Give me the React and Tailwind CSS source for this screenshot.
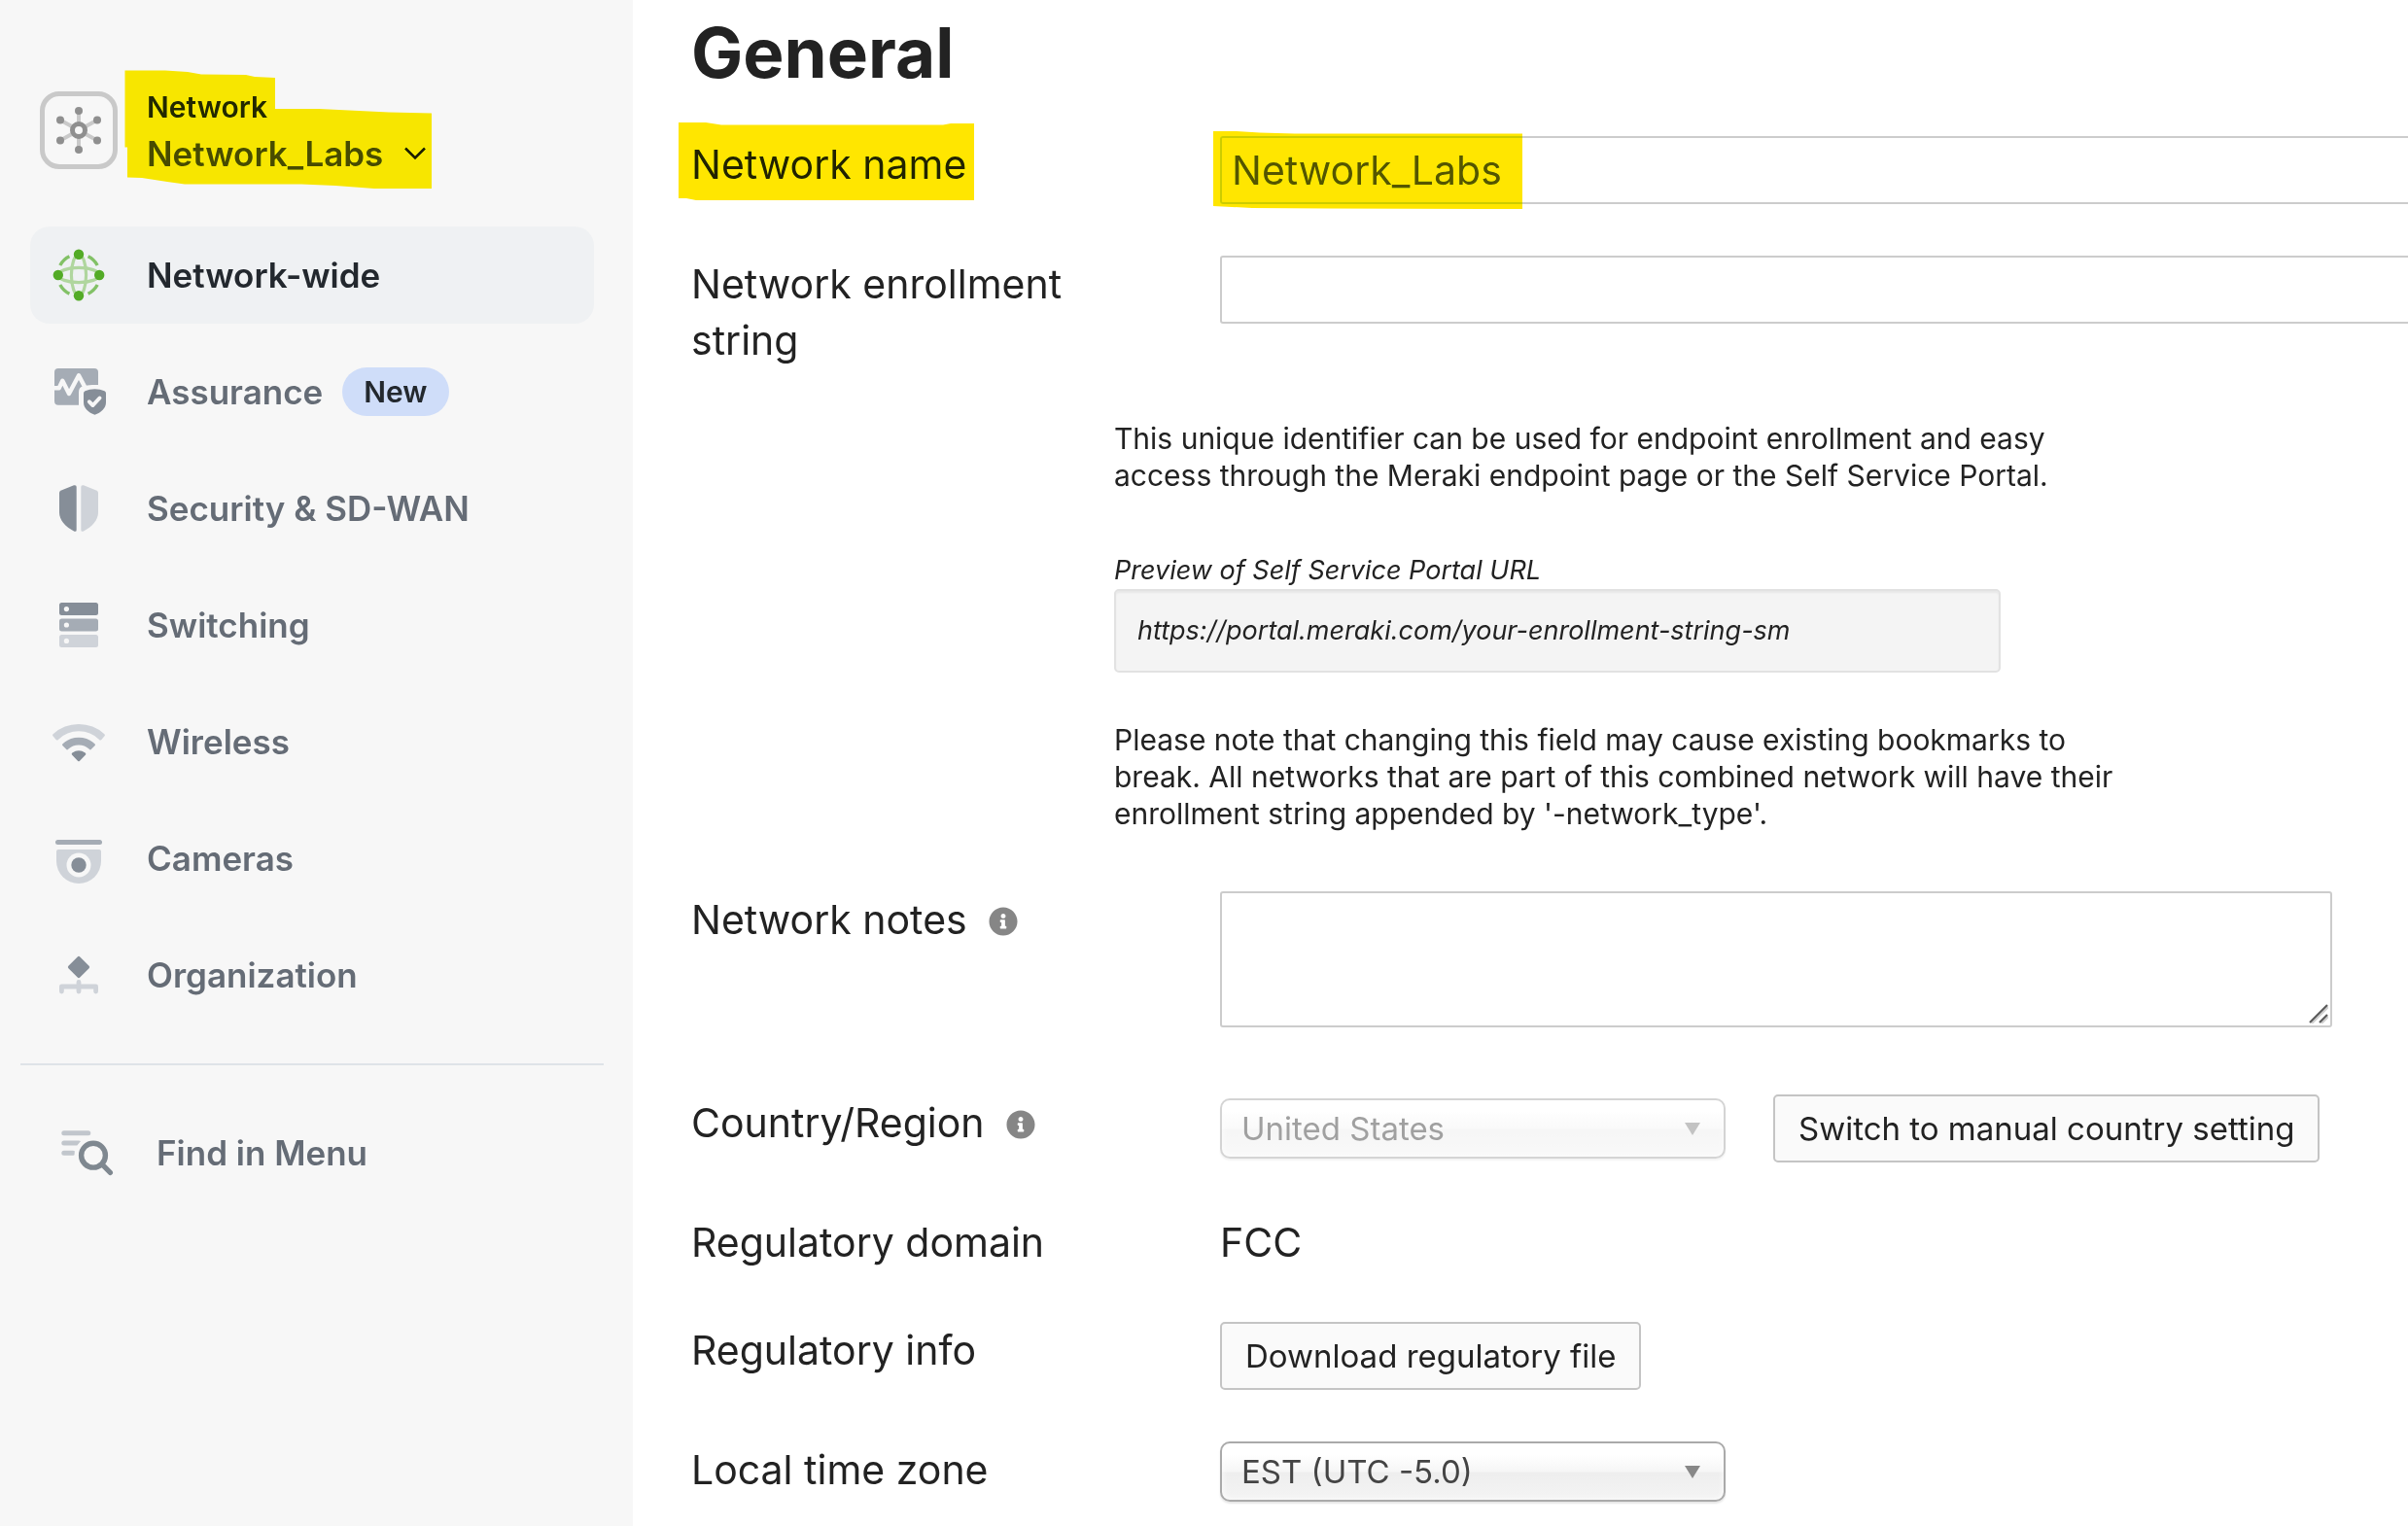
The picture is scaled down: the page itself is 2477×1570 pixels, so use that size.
import React, { useState } from 'react';
import { FaInfoCircle } from 'react-icons/fa';

const NetworkHubIcon = () => (
  <svg viewBox="0 0 70 70" className="w-full h-full" aria-hidden="true">
    <g stroke="#c9c9c9" strokeWidth="4">
      <path d="M35 15V55M16 24.5L54 45.5M54 24.5L16 45.5" />
    </g>
    <circle cx="35" cy="35" r="6.5" fill="#f7f7f7" stroke="#8f8f8f" strokeWidth="5" />
    <g fill="#8f8f8f">
      <circle cx="35" cy="15" r="4" />
      <circle cx="35" cy="55" r="4" />
      <circle cx="16" cy="24.5" r="4" />
      <circle cx="54" cy="24.5" r="4" />
      <circle cx="16" cy="45.5" r="4" />
      <circle cx="54" cy="45.5" r="4" />
    </g>
  </svg>
);

const GlobeIcon = () => (
  <svg viewBox="0 0 56 56" className="w-14 h-14 shrink-0" fill="none" aria-hidden="true">
    <g stroke="#b0d69e" strokeWidth="3.2">
      <ellipse cx="28" cy="28" rx="7.6" ry="21" />
      <ellipse cx="28" cy="28" rx="21" ry="7.6" />
    </g>
    <g stroke="#82c166" strokeWidth="3.4">
      <path d="M8.8 18A22 22 0 0 1 18.4 8.8" />
      <path d="M37.6 8.8A22 22 0 0 1 47.2 18" />
      <path d="M47.2 38A22 22 0 0 1 37.6 47.2" />
      <path d="M18.4 47.2A22 22 0 0 1 8.8 38" />
    </g>
    <g fill="#53ab26">
      <circle cx="28" cy="6.8" r="5.2" />
      <circle cx="28" cy="49.2" r="5.2" />
      <circle cx="6.8" cy="28" r="5.2" />
      <circle cx="49.2" cy="28" r="5.2" />
    </g>
  </svg>
);

const AssuranceIcon = () => (
  <svg viewBox="0 0 56 56" className="w-14 h-14 shrink-0" fill="none" aria-hidden="true">
    <rect x="3" y="4" width="45" height="37.7" rx="4" fill="#a5acb5" />
    <path
      d="M2 24.3H7.7L11.3 16.7L18 30L28 11.3L36 26.5"
      stroke="#f7f7f7"
      strokeWidth="4.4"
      strokeLinejoin="round"
    />
    <path d="M28 43V28.5Q28 23.5 32 22.5Q38 20.5 44 21H50V43Z" fill="#f7f7f7" />
    <path
      d="M44.5 25.3Q50 25.5 54.5 27.3Q56 28 56 29.5V39C56 45 51 49.5 44.5 51.8C38 49.5 33 45 33 39V29.5Q33 28 34.5 27.3Q39 25.5 44.5 25.3Z"
      fill="#868e98"
    />
    <path
      d="M38.9 38.3L42.5 42L49.5 34.5"
      stroke="#f7f7f7"
      strokeWidth="4"
      strokeLinecap="round"
      strokeLinejoin="round"
    />
  </svg>
);

const ShieldIcon = () => (
  <svg viewBox="0 0 56 56" className="w-14 h-14 shrink-0" aria-hidden="true">
    <path
      d="M25.7 6V50Q25.7 52.4 23.5 51.7C14 47 8 40 8 32V12Q8 10.3 10 9.5L23 4.3Q25.7 3.6 25.7 6Z"
      fill="#868e98"
    />
    <path
      d="M30.3 6V50Q30.3 52.4 32.5 51.7C42 47 48 40 48 32V12Q48 10.3 46 9.5L33 4.3Q30.3 3.6 30.3 6Z"
      fill="#cfd3d9"
    />
  </svg>
);

const SwitchIcon = () => (
  <svg viewBox="0 0 56 56" className="w-14 h-14 shrink-0" aria-hidden="true">
    <rect x="8" y="5" width="40" height="13" rx="2.5" fill="#868e98" />
    <rect x="8" y="21.6" width="40" height="13" rx="2.5" fill="#a5acb5" />
    <rect x="8" y="38" width="40" height="13" rx="2.5" fill="#cfd3d9" />
    <g fill="#f7f7f7">
      <circle cx="15.4" cy="11.6" r="2.6" />
      <circle cx="15.4" cy="28" r="2.6" />
      <circle cx="15.4" cy="44.4" r="2.6" />
    </g>
  </svg>
);

const WirelessIcon = () => (
  <svg viewBox="0 0 56 56" className="w-14 h-14 shrink-0" fill="none" aria-hidden="true">
    <g strokeLinejoin="round" strokeWidth="3">
      <path
        d="M2.6 21.3A38 38 0 0 1 53.4 21.3L50.2 25A31.5 31.5 0 0 0 5.8 25Z"
        fill="#cfd3d9"
        stroke="#cfd3d9"
      />
      <path
        d="M12.6 31.3A22.5 22.5 0 0 1 43.4 31.3L39.9 34.8A17 17 0 0 0 16.1 34.8Z"
        fill="#a5acb5"
        stroke="#a5acb5"
      />
      <path d="M22.2 40.8Q28 36.8 33.8 40.8L28 46.6Z" fill="#868e98" stroke="#868e98" />
    </g>
  </svg>
);

const CameraIcon = () => (
  <svg viewBox="0 0 56 56" className="w-14 h-14 shrink-0" aria-hidden="true">
    <rect x="4" y="9" width="48" height="5" rx="2.5" fill="#a5acb5" />
    <path d="M7 19H49Q51 19 51 21V31A23 23 0 0 1 5 31V21Q5 19 7 19Z" fill="#cfd3d9" />
    <circle cx="28" cy="35" r="12.5" fill="#f7f7f7" />
    <circle cx="28" cy="35" r="7.7" fill="#868e98" />
  </svg>
);

const OrganizationIcon = () => (
  <svg viewBox="0 0 56 56" className="w-14 h-14 shrink-0" fill="none" aria-hidden="true">
    <path
      d="M28 10.7L37.3 20L28 29.3L18.7 20Z"
      fill="#868e98"
      stroke="#868e98"
      strokeWidth="3.6"
      strokeLinejoin="round"
    />
    <path
      d="M10.4 45V40H45.6V45M28 35.5V45"
      stroke="#cfd3d9"
      strokeWidth="4.8"
      strokeLinecap="round"
      strokeLinejoin="round"
    />
  </svg>
);

const FindIcon = () => (
  <svg viewBox="0 0 56 56" className="w-14 h-14 shrink-0" fill="none" aria-hidden="true">
    <path
      d="M4.8 7.8H29.8M4.8 18H20M4.8 28.2H14"
      stroke="#c1c6cc"
      strokeWidth="5"
      strokeLinecap="round"
    />
    <circle cx="35" cy="30.7" r="17" fill="#f7f7f7" stroke="#f7f7f7" strokeWidth="5" />
    <circle cx="35" cy="30.7" r="12.4" stroke="#7f8890" strokeWidth="5.4" />
    <path d="M44.5 40.4L52.4 48.4" stroke="#7f8890" strokeWidth="5.2" strokeLinecap="round" />
  </svg>
);

const navItems = [
  { label: 'Network-wide', icon: GlobeIcon },
  { label: 'Assurance', icon: AssuranceIcon, badge: 'New' },
  { label: 'Security & SD-WAN', icon: ShieldIcon },
  { label: 'Switching', icon: SwitchIcon },
  { label: 'Wireless', icon: WirelessIcon },
  { label: 'Cameras', icon: CameraIcon },
  { label: 'Organization', icon: OrganizationIcon },
];

const Sidebar = () => (
  <aside className="w-[651px] shrink-0 bg-[#f7f7f7] pt-[88px] pl-[21px] pr-[30px] text-[35px] font-semibold text-[#656c76]">
    <button type="button" className="relative flex items-center gap-[30px] ml-5 text-left">
      <span className="w-20 h-20 shrink-0 rounded-[20px] border-[5px] border-[#c9c9c9]">
        <NetworkHubIcon />
      </span>
      <span className="flex flex-col gap-1">
        <span className="text-[30px] leading-[44px] text-[#23282e]">Network</span>
        <span className="flex items-center gap-[22px] leading-[44px] text-[#484b52]">
          Network_Labs
          <svg viewBox="0 0 22 14" className="w-[22px] h-[14px]" fill="none" aria-hidden="true">
            <path d="M1 1.5L11 11.5L21 1.5" stroke="#1c1c1c" strokeWidth="2.6" />
          </svg>
        </span>
      </span>
      {/* marker stroke over the network switcher */}
      <svg
        viewBox="0 0 316 122"
        className="absolute left-[87px] -top-4 w-[316px] h-[122px] mix-blend-darken"
        aria-hidden="true"
      >
        <path
          d="M.5 .5H42L65 2L79 4.5L125 5L134 7L155 8V40H200L272 43.5L316 44.5V122H257L217 119L182 117.5H62L44 115L18 111L3 110.5V79.5H.5Z"
          fill="#ffe600"
        />
      </svg>
    </button>

    <nav className="mt-[53px] mx-2.5">
      <ul className="flex flex-col gap-5">
        {navItems.map(({ label, icon: Icon, badge }, i) => (
          <li key={label}>
            <a
              href="#"
              className={
                i === 0
                  ? 'flex items-center gap-[42px] h-[100px] pl-[22px] rounded-[20px] bg-[#eff1f3] text-[#23282e]'
                  : 'flex items-center gap-[42px] h-[100px] pl-[22px] rounded-[20px]'
              }
            >
              <Icon />
              <span className="flex items-center gap-5">
                {label}
                {badge && (
                  <span className="rounded-full bg-[#cfddf9] px-[22px] text-[30px] leading-[50px] text-[#23282e]">
                    {badge}
                  </span>
                )}
              </span>
            </a>
          </li>
        ))}
      </ul>
    </nav>

    <hr className="mt-[41px] border-t-2 border-[#dfe3e8]" />

    <button type="button" className="flex items-center gap-11 h-[100px] mt-10 ml-10">
      <FindIcon />
      Find in Menu
    </button>
  </aside>
);

const Row = ({ label, htmlFor, info, marked, children }) => (
  <div className="flex items-start">
    <div className="w-[544px] shrink-0 flex items-center gap-[22px]">
      <label htmlFor={htmlFor} className="relative max-w-[460px]">
        {label}
        {marked && (
          <svg
            viewBox="0 0 304 80"
            className="absolute -left-[13px] -top-3.5 w-[304px] h-20 mix-blend-darken"
            aria-hidden="true"
          >
            <path d="M0 0H28L44 2.5H272L280 1H304V80H18L8 78H0Z" fill="#ffe600" />
          </svg>
        )}
      </label>
      {info && <FaInfoCircle className="w-[30px] h-[30px] mt-1 text-[#868686]" />}
    </div>
    <div className="flex-1 min-w-0">{children}</div>
  </div>
);

const Select = ({ id, value, disabled }) => (
  <div className={disabled ? 'relative w-[520px] opacity-50' : 'relative w-[520px]'}>
    <select
      id={id}
      disabled={disabled}
      defaultValue={value}
      className="block appearance-none w-full h-[62px] px-5 rounded-[10px] border-2 border-[#aaa] bg-[linear-gradient(#fff_20%,#f6f6f6_50%,#eee_52%,#f4f4f4_100%)] shadow-[inset_0_0_6px_#fff,0_2px_2px_rgba(0,0,0,0.1)] text-[33px] leading-[40px] text-[#444] opacity-100"
    >
      <option>{value}</option>
    </select>
    <svg
      viewBox="0 0 16 13"
      className="absolute right-[26px] top-[25px] w-4 h-[13px] pointer-events-none"
      aria-hidden="true"
    >
      <path d="M0 0H16L8 13Z" fill="#888" />
    </svg>
  </div>
);

const Button = ({ children }) => (
  <button
    type="button"
    className="h-[70px] px-6 whitespace-nowrap rounded-[5px] border-2 border-[#c4c4c4] bg-[#fafafa] text-[33px]"
  >
    {children}
  </button>
);

const App = () => {
  const [name, setName] = useState('Network_Labs');
  const [enrollment, setEnrollment] = useState('');
  const [notes, setNotes] = useState('');

  return (
    <div className="flex min-h-screen overflow-x-hidden bg-white font-['Inter',sans-serif] text-[#222]">
      <Sidebar />

      <main className="flex-1 min-w-0 pl-[60px] pt-3.5">
        <h1 className="text-[71px] leading-[80px] font-bold">General</h1>

        <form className="mt-[46px] flex flex-col gap-[53px] text-[41px] leading-[58px]">
          <Row label="Network name" htmlFor="name" marked>
            <div className="relative -mr-4">
              <input
                id="name"
                type="text"
                value={name}
                onChange={(e) => setName(e.target.value)}
                className="block w-full h-[70px] px-2.5 rounded-[3px] border-2 border-[#ccc] bg-white text-[#555]"
              />
              <svg
                viewBox="0 0 318 80"
                className="absolute -left-[7px] -top-[5px] w-[318px] h-20 mix-blend-darken pointer-events-none"
                aria-hidden="true"
              >
                <path d="M0 0H24L48 1.5L84 2.5H318V80L120 79.5L40 79L0 77Z" fill="#ffe600" />
              </svg>
            </div>
          </Row>

          <Row label="Network enrollment string" htmlFor="enrollment">
            <div className="-mr-4">
              <input
                id="enrollment"
                type="text"
                value={enrollment}
                onChange={(e) => setEnrollment(e.target.value)}
                className="block w-full h-[70px] px-2.5 rounded-[3px] border-2 border-[#ccc] bg-white text-[#555]"
              />
            </div>
          </Row>

          <div className="pb-2 pl-[435px] text-[30px] leading-[38px]">
            <p className="max-w-[1040px]">
              This unique identifier can be used for endpoint enrollment and easy access through the
              Meraki endpoint page or the Self Service Portal.
            </p>
            <div className="mt-[60px] max-w-[912px] text-[27px] italic">
              <p>Preview of Self Service Portal URL</p>
              <p className="h-[86px] flex items-center px-[22px] rounded-[5px] border-2 border-[#e2e2e2] bg-[#f4f4f4] shadow-[inset_0_2px_2px_rgba(0,0,0,0.05)]">
                https://portal.meraki.com/your-enrollment-string-sm
              </p>
            </div>
            <p className="mt-[50px] max-w-[1040px]">
              Please note that changing this field may cause existing bookmarks to break. All
              networks that are part of this combined network will have their enrollment string
              appended by '-network_type'.
            </p>
          </div>

          <Row label="Network notes" htmlFor="notes" info>
            <div className="relative mb-4 max-w-[1144px]">
              <textarea
                id="notes"
                value={notes}
                onChange={(e) => setNotes(e.target.value)}
                className="block w-full h-[140px] px-2.5 resize-none rounded-[3px] border-2 border-[#ccc] bg-white text-[#555]"
              />
              <svg
                viewBox="0 0 20 20"
                className="absolute right-1 bottom-1 w-5 h-5 pointer-events-none"
                fill="none"
                aria-hidden="true"
              >
                <path d="M3 20L20 3M13 20L20 13" stroke="#cfcfcf" strokeWidth="2" />
                <path d="M1 19L19 1M11 19L19 11" stroke="#5a5a5a" strokeWidth="2.2" />
              </svg>
            </div>
          </Row>

          <Row label="Country/Region" htmlFor="country" info>
            <div className="flex items-center gap-[49px]">
              <Select id="country" value="United States" disabled />
              <Button>Switch to manual country setting</Button>
            </div>
          </Row>

          <Row label="Regulatory domain">FCC</Row>

          <Row label="Regulatory info">
            <div className="flex">
              <Button>Download regulatory file</Button>
            </div>
          </Row>

          <Row label="Local time zone" htmlFor="timezone">
            <Select id="timezone" value="EST (UTC -5.0)" />
          </Row>
        </form>
      </main>
    </div>
  );
};

export default App;
